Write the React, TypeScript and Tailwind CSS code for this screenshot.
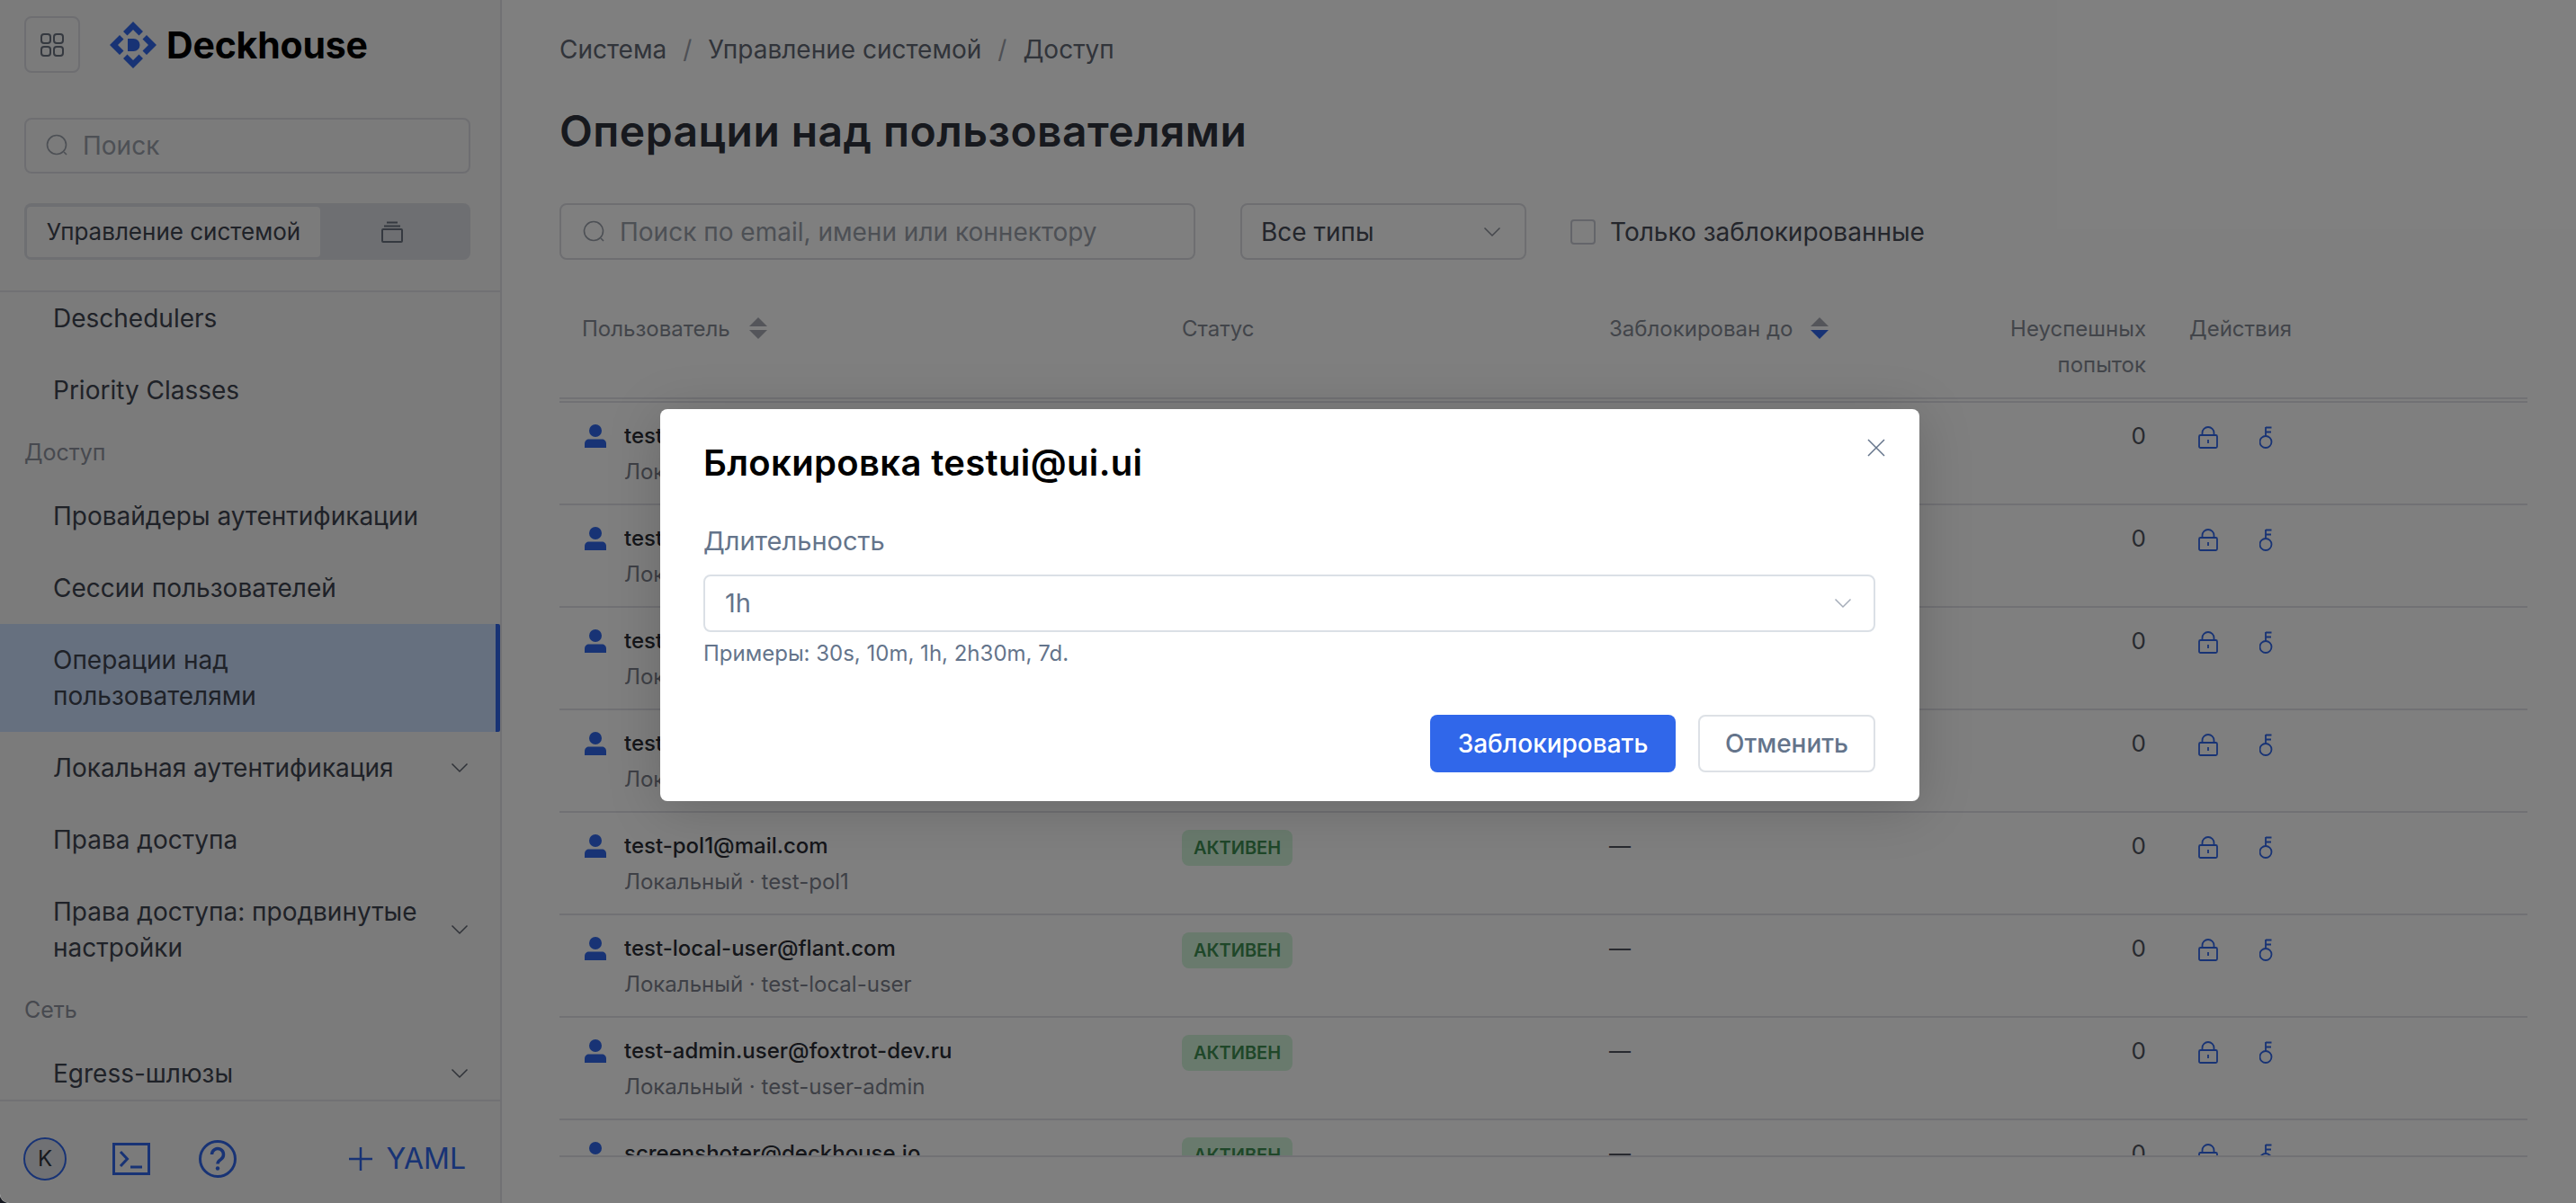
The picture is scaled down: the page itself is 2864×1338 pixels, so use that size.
import React from 'react';

const rows = [
  { email: 'testui@ui.ui', sub: 'Локальный · testui' },
  { email: 'test-user@mail.com', sub: 'Локальный · test-user' },
  { email: 'test-pol2@mail.com', sub: 'Локальный · test-pol2' },
  { email: 'test-pol3@mail.com', sub: 'Локальный · test-pol3' },
  { email: 'test-pol1@mail.com', sub: 'Локальный · test-pol1' },
  { email: 'test-local-user@flant.com', sub: 'Локальный · test-local-user' },
  { email: 'test-admin.user@foxtrot-dev.ru', sub: 'Локальный · test-user-admin' },
  { email: 'screenshoter@deckhouse.io', sub: 'Локальный · screenshoter' },
];

const SearchIcon = () => (
  <svg width="26" height="26" viewBox="0 0 26 26" fill="none" stroke="#9aa0aa" strokeWidth="1.6" className="shrink-0">
    <circle cx="12" cy="12" r="10.5" />
    <path d="M20 20l3 3" />
  </svg>
);

const Chevron = ({ className = 'stroke-[#5f6470]' }: { className?: string }) => (
  <svg width="20" height="12" viewBox="0 0 20 12" fill="none" strokeWidth="1.5" className={'shrink-0 ' + className}>
    <path d="M1.5 1.5L10 10l8.5-8.5" />
  </svg>
);

const SortIcon = ({ active }: { active?: boolean }) => (
  <svg width="22" height="24" viewBox="0 0 22 24" className="shrink-0">
    <path d="M11 0l10 10H1z" fill="#a8aab4" />
    <path d="M11 24L1 14h20z" fill={active ? '#3067ea' : '#a8aab4'} />
  </svg>
);

const UserIcon = () => (
  <svg width="24" height="26" viewBox="0 0 24 26" fill="#3067ea" className="shrink-0">
    <circle cx="12" cy="7" r="7" />
    <path d="M0 26v-4.500c0-3 2-5 5-5h14c3 0 5 2 5 5V26z" />
  </svg>
);

const LockIcon = () => (
  <svg width="22" height="25" viewBox="0 0 22 25" fill="none" stroke="#3067ea" strokeWidth="1.8" className="shrink-0">
    <rect x="1" y="10" width="20" height="14" rx="1.5" />
    <path d="M4.5 10V7.5a6.5 6.5 0 0113 0V10" />
    <path d="M11 15v4" />
  </svg>
);

const KeyIcon = () => (
  <svg width="15" height="25" viewBox="0 0 15 25" fill="none" stroke="#3067ea" strokeWidth="1.8" className="shrink-0">
    <circle cx="7" cy="17.500" r="6.500" />
    <path d="M7 11V1M7 1.500h6.500M7 6.500h6" />
  </svg>
);

const Logo = () => (
  <svg width="52" height="52" viewBox="0 0 52 52" fill="#3067ea" className="shrink-0">
    <path d="M26 0l11 11-4.500 4.500L26 9l-6.500 6.500L15 11z" />
    <path d="M26 52L15 41l4.500-4.500L26 43l6.500-6.500L37 41z" />
    <path d="M0 26l11-11 4.500 4.500L9 26l6.500 6.500L11 37z" />
    <path d="M52 26L41 37l-4.500-4.500L43 26l-6.500-6.500L41 15z" />
    <path d="M20 19h6.500a7 7 0 010 14H20z" />
  </svg>
);

const MenuItem = ({ label, chevron, active }: { label: string; chevron?: boolean; active?: boolean }) => (
  <div
    className={
      'flex items-center justify-between py-[20px] pl-[59px] pr-[35px] text-[28px] leading-[40px] text-[#3f4450] ' +
      (active ? 'bg-[#cde0ff] border-r-[5px] border-[#3067ea] rounded-r-[2px]' : '')
    }
  >
    <span className="max-w-[410px]">{label}</span>
    {chevron && <Chevron />}
  </div>
);

const SectionLabel = ({ label }: { label: string }) => (
  <div className="flex h-[60px] items-center pl-[27px] text-[25px] text-[#8e939e]">{label}</div>
);

const Sidebar = () => (
  <aside className="flex h-full w-[558px] shrink-0 flex-col border-r-2 border-[#e2e3e8] bg-[#f6f6f6]">
    <div className="pl-[27px] pr-[33px] pt-[18px]">
      <div className="flex items-center">
        <div className="flex h-[63px] w-[62px] items-center justify-center rounded-[8px] border-2 border-[#dcdde3]">
          <svg width="26" height="26" viewBox="0 0 26 26" fill="none" stroke="#6b7280" strokeWidth="2">
            <rect x="1" y="1" width="10" height="10" rx="3" />
            <rect x="15" y="1" width="10" height="10" rx="3" />
            <rect x="1" y="15" width="10" height="10" rx="3" />
            <rect x="15" y="15" width="10" height="10" rx="3" />
          </svg>
        </div>
        <div className="ml-[33px]">
          <Logo />
        </div>
        <span className="ml-[11px] text-[41px] font-bold leading-[50px] tracking-[-0.2px] text-black">Deckhouse</span>
      </div>
      <div className="mt-[50px] flex h-[62px] items-center gap-[15px] rounded-[8px] border-2 border-[#dcdde3] pl-[22px]">
        <SearchIcon />
        <span className="text-[28px] text-[#9aa0aa]">Поиск</span>
      </div>
      <div className="mt-[33px] flex h-[63px] items-center rounded-[8px] bg-[#dcdee4] p-[3px]">
        <div className="flex h-[56px] w-[326px] items-center justify-center rounded-[4px] bg-[#f6f6f6] text-[26px] text-[#3f4450]">
          Управление системой
        </div>
        <div className="flex flex-1 items-center justify-center pr-[4px]">
          <svg width="24" height="24" viewBox="0 0 24 24" fill="none" stroke="#6b7280" strokeWidth="2">
            <rect x="1" y="9" width="22" height="14" rx="1" />
            <path d="M3 5.500h18M6 1.500h12" />
          </svg>
        </div>
      </div>
    </div>
    <div className="mt-[34px] flex-1 overflow-hidden border-y-2 border-[#e2e3e8]">
      <div className="-mt-[11px]">
        <MenuItem label="Deschedulers" />
        <MenuItem label="Priority Classes" />
        <SectionLabel label="Доступ" />
        <MenuItem label="Провайдеры аутентификации" />
        <MenuItem label="Сессии пользователей" />
        <MenuItem label="Операции над пользователями" active />
        <MenuItem label="Локальная аутентификация" chevron />
        <MenuItem label="Права доступа" />
        <MenuItem label="Права доступа: продвинутые настройки" chevron />
        <SectionLabel label="Сеть" />
        <MenuItem label="Egress-шлюзы" chevron />
      </div>
    </div>
    <div className="flex h-[113px] shrink-0 items-center pl-[26px] pr-[38px] pt-[14px]">
      <div className="flex h-[48px] w-[48px] items-center justify-center rounded-full border-2 border-[#3067ea] bg-[#e0e2e8] text-[24px] text-[#2f333c]">
        K
      </div>
      <svg width="42" height="36" viewBox="0 0 42 36" fill="none" stroke="#3067ea" strokeWidth="3" className="ml-[51px]">
        <rect x="1.500" y="1.500" width="39" height="33" />
        <path d="M9 10l7.500 8L9 26" />
        <path d="M20 27h13" />
      </svg>
      <svg width="42" height="42" viewBox="0 0 42 42" fill="none" className="ml-[54px]">
        <circle cx="21" cy="21" r="19.500" stroke="#3067ea" strokeWidth="3" />
        <path d="M14.500 16a6.500 6.500 0 1110 5.500c-2.500 1.500-3.500 2.500-3.500 5" stroke="#3067ea" strokeWidth="3.500" />
        <circle cx="21" cy="31.500" r="2.200" fill="#3067ea" />
      </svg>
      <svg width="26" height="26" viewBox="0 0 26 26" fill="none" stroke="#3067ea" strokeWidth="2.500" className="ml-auto">
        <path d="M13 0v26M0 13h26" />
      </svg>
      <span className="ml-[16px] text-[32px] text-[#3067ea]">YAML</span>
    </div>
  </aside>
);

const ActiveBadge = () => (
  <span className="inline-flex h-[40px] w-[123px] items-center justify-center rounded-[8px] bg-[#d2f5da] text-[20px] font-semibold text-[#3f8f52]">
    АКТИВЕН
  </span>
);

const UserRow = ({ email, sub }: { email: string; sub: string }) => (
  <div className="grid h-[114px] shrink-0 grid-cols-[692px_475px_397px_200px_1fr] border-b-2 border-[#e2e3e8] pt-[17px] text-[24px] leading-[40px]">
    <div className="flex pl-[28px]">
      <div className="pt-[7px]">
        <UserIcon />
      </div>
      <div className="ml-[20px]">
        <div className="font-medium text-[#2a2d35]">{email}</div>
        <div className="text-[#7c818d]">{sub}</div>
      </div>
    </div>
    <div className="pt-[1px]">
      <ActiveBadge />
    </div>
    <div className="text-[#50555f]">—</div>
    <div className="text-right text-[26px] text-[#50555f]">0</div>
    <div className="flex items-start gap-[46px] pl-[58px] pt-[9px]">
      <LockIcon />
      <KeyIcon />
    </div>
  </div>
);

const UsersTable = () => (
  <div className="mt-[57px] flex h-[941px] w-[2188px] flex-col overflow-hidden border-b-2 border-[#e2e3e8]">
    <div className="grid h-[102px] shrink-0 grid-cols-[692px_475px_397px_200px_1fr] border-b-[6px] border-double border-[#e2e3e8] text-[24px] leading-[40px] text-[#858a95]">
      <div className="flex items-start gap-[20px] pl-[25px]">
        <span>Пользователь</span>
        <div className="pt-[7px]">
          <SortIcon />
        </div>
      </div>
      <div>Статус</div>
      <div className="flex items-start gap-[9px]">
        <span>Заблокирован до</span>
        <div className="pt-[7px] pl-[10px]">
          <SortIcon active />
        </div>
      </div>
      <div className="text-right">
        Неуспешных
        <br />
        попыток
      </div>
      <div className="pl-[48px]">Действия</div>
    </div>
    {rows.map((row) => (
      <UserRow key={row.email} email={row.email} sub={row.sub} />
    ))}
  </div>
);

const Main = () => (
  <main className="flex min-w-0 flex-1 flex-col bg-white pl-[64px] pt-[35px]">
    <div className="flex h-[40px] items-center gap-[18px] text-[28px] text-[#636875]">
      <span>Система</span>
      <span className="text-[#9ca0aa]">/</span>
      <span>Управление системой</span>
      <span className="text-[#9ca0aa]">/</span>
      <span>Доступ</span>
    </div>
    <h1 className="mt-[39px] text-[48px] font-semibold leading-[64px] tracking-[0.45px] text-[#2f323c]">Операции над пользователями</h1>
    <div className="mt-[48px] flex h-[63px] items-center">
      <div className="flex h-[63px] w-[707px] items-center gap-[15px] rounded-[8px] border-2 border-[#dcdde3] pl-[24px]">
        <SearchIcon />
        <span className="text-[28px] text-[#9aa0aa]">Поиск по email, имени или коннектору</span>
      </div>
      <div className="ml-[50px] flex h-[63px] w-[318px] items-center justify-between rounded-[8px] border-2 border-[#dcdde3] pl-[21px] pr-[26px] text-[28px] text-[#484c58]">
        <span>Все типы</span>
        <Chevron className="stroke-[#8a8f99]" />
      </div>
      <div className="ml-[49px] h-[28px] w-[28px] rounded-[4px] border-2 border-[#c9cbd4]" />
      <span className="ml-[16px] text-[28px] text-[#484c58]">Только заблокированные</span>
    </div>
    <UsersTable />
  </main>
);

const BlockDialog = () => (
  <div className="absolute left-[734px] top-[455px] h-[436px] w-[1400px] rounded-[8px] bg-white pl-[48px] pr-[49px] pt-[36px] shadow-[0_8px_60px_rgba(0,0,0,0.18)]">
    <svg width="20" height="20" viewBox="0 0 20 20" fill="none" stroke="#64748b" strokeWidth="1.500" className="absolute right-[38px] top-[33px]">
      <path d="M1 1l18 18M19 1L1 19" />
    </svg>
    <h2 className="text-[40px] font-semibold leading-[48px] tracking-[0.35px] text-black">Блокировка testui@ui.ui</h2>
    <div className="mt-[43px] text-[29px] leading-[40px] text-[#64748b]">Длительность</div>
    <div className="mt-[17px] flex h-[64px] items-center justify-between rounded-[8px] border-2 border-[#dbe0e6] pl-[22px] pr-[24px] text-[29px] text-[#64748b]">
      <span>1h</span>
      <Chevron className="stroke-[#a5adb9]" />
    </div>
    <div className="mt-[8px] text-[24px] leading-[32px] text-[#64748b]">Примеры: 30s, 10m, 1h, 2h30m, 7d.</div>
    <div className="mt-[52px] flex justify-end gap-[25px]">
      <button className="flex h-[64px] w-[273px] items-center justify-center rounded-[8px] bg-[#3067ea] text-[28px] font-medium text-white">
        Заблокировать
      </button>
      <button className="flex h-[64px] w-[197px] items-center justify-center rounded-[8px] border-2 border-[#dde1e6] bg-white text-[28px] font-medium text-[#64748b]">
        Отменить
      </button>
    </div>
  </div>
);

export default function App() {
  return (
    <div className="bg-[#15181f]">
      <div className="relative flex h-[1338px] w-[2864px] overflow-hidden rounded-bl-[10px] bg-white font-[Inter,sans-serif]">
        <Sidebar />
        <Main />
        <div className="absolute inset-0 bg-black/50" />
        <BlockDialog />
      </div>
    </div>
  );
}
